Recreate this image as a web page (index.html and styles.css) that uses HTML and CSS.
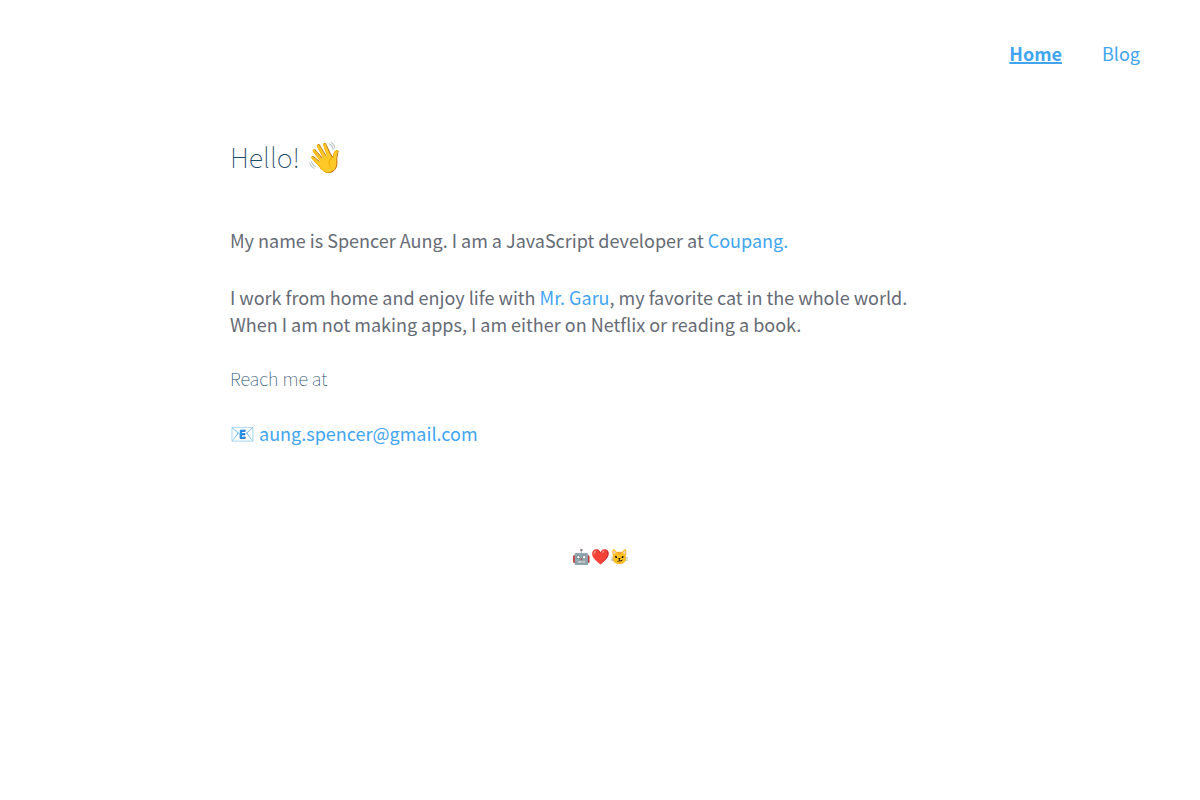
FILE: index.html
```
<!DOCTYPE html>
<html lang="en">
<head>
    <meta charset="UTF-8">
    <meta name="viewport" content="width=device-width, initial-scale=1.0">
    <title>Spencer Aung</title>
    <link rel="stylesheet" href="styles.css">
</head>
<body>
    <nav>
        <a class="active" href="#">Home</a>
        <a href="#blog">Blog</a>
    </nav>
    <main>
        <h1>Hello! <span class="wave">👋</span></h1>
        <p>My name is Spencer Aung. I am a JavaScript developer at <a href="#coupang">Coupang.</a></p>
        <p>I work from home and enjoy life with <a href="#garu">Mr. Garu</a>, my favorite cat in the whole world.<br>When I am not making apps, I am either on Netflix or reading a book.</p>
        <h2>Reach me at</h2>
        <p><a href="mailto:aung.spencer@gmail.com"><span class="mail">📧</span> aung.spencer@gmail.com</a></p>
    </main>
    <footer>🤖❤️😼</footer>
</body>
</html>
```
FILE: styles.css
```
body {
    margin: 0;
    font-family: "Noto Sans CJK JP", sans-serif;
    font-size: 18px;
    line-height: 27px;
    color: #666b75;
}
a {
    color: #42a5f0;
    text-decoration: none;
}
nav {
    display: flex;
    justify-content: flex-end;
    gap: 40px;
    padding: 40px 60px;
}
.active {
    font-weight: bold;
    text-decoration: underline;
    text-decoration-thickness: 2px;
}
main {
    max-width: 740px;
    margin: 0 auto;
}
h1 {
    margin: 30px 0 52px;
    font-size: 27px;
    line-height: 36px;
    font-weight: 100;
    color: #1b4a6b;
}
.wave {
    font-size: 30px;
}
h2 {
    margin: 27px 0;
    font-size: 18px;
    font-weight: 100;
    color: #1b4a6b;
}
p {
    margin: 0 0 27px;
}
p + p {
    margin-top: 30px;
}
.mail {
    font-size: 20px;
}
footer {
    margin-top: 95px;
    font-size: 15px;
    text-align: center;
}
```
